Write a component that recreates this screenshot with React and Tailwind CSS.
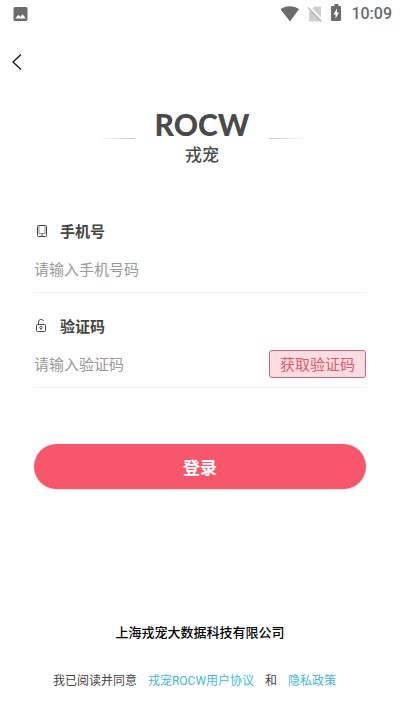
import { useState } from 'react';

function StatusBar() {
  return (
    <div className="flex h-7 items-center justify-between pl-3 pr-2 text-[#6b6b6b]">
      <svg className="h-4 w-4" viewBox="0 0 16 16" fill="currentColor">
        <path fillRule="evenodd" d="M3 1h11a1.5 1.5 0 0 1 1.5 1.5v11A1.5 1.5 0 0 1 14 15H3a1.5 1.5 0 0 1-1.5-1.5v-11A1.5 1.5 0 0 1 3 1zM3.2 12.5h10.6L10.6 8.2 8.3 11.1 6.4 8.8z" />
      </svg>
      <div className="flex items-center">
        <svg className="h-5 w-5" viewBox="0 0 20 20" fill="currentColor">
          <path d="M11 17.500 1.500 5.200C4 3.200 7.300 2.200 11 2.200s6.500 1 9 3z" />
        </svg>
        <svg className="ml-1 h-5 w-5" viewBox="0 0 20 20">
          <path d="M18 2.500v15H6V8L11.500 2.500z" fill="#cfcfcf" />
          <path d="M6 2.500 20 17" stroke="#fff" strokeWidth="2" />
          <path d="M5 3.500 18.500 17.500" stroke="#b5b5b5" strokeWidth="1.200" />
        </svg>
        <svg className="ml-1 h-5 w-4" viewBox="0 0 16 20" fill="currentColor">
          <path fillRule="evenodd" d="M7.500 0h4v2h1.700c.5 0 .8.300.8.800v13.400c0 .5-.3.800-.8.800H4.800c-.5 0-.8-.3-.8-.8V2.800c0-.5.300-.8.800-.8h2.700zM10 4.500 6.500 10.500h2.100v4L12 8.500h-2z" />
        </svg>
        <span className="ml-2 font-[Roboto,sans-serif] text-base font-medium">10:09</span>
      </div>
    </div>
  );
}

function PhoneIcon() {
  return (
    <svg className="h-4 w-4" viewBox="0 0 16 16" fill="none" stroke="#444">
      <rect x="3.500" y="2.500" width="9" height="11" rx="1" />
      <path d="M5 3v7.500h6V3" strokeWidth="0.6" />
      <path d="M7 12h2" />
    </svg>
  );
}

function LockIcon() {
  return (
    <svg className="h-4 w-4" viewBox="0 0 16 16" fill="none" stroke="#444">
      <rect x="2.500" y="6.500" width="9" height="7" rx="1" />
      <path d="M4.500 6.500V4a2.600 2.600 0 0 1 5-1" />
      <circle cx="7" cy="9.500" r="1.200" strokeWidth="0.9" />
      <path d="M7 10.700v1.300" strokeWidth="0.9" />
    </svg>
  );
}

function Field({ id, label, icon, placeholder, value, onChange, children }) {
  return (
    <div className="border-b border-[#f2f2f2] pb-px">
      <label htmlFor={id} className="flex h-6 items-center gap-2.5 text-[15px] font-bold text-[#444]">
        {icon}
        {label}
      </label>
      <div className="mt-1 flex h-11 items-center">
        <input
          id={id}
          type="text"
          placeholder={placeholder}
          value={value}
          onChange={(e) => onChange(e.target.value)}
          className="min-w-0 flex-1 text-[15px] text-[#444] outline-none placeholder:text-[#999]"
        />
        {children}
      </div>
    </div>
  );
}

function App() {
  const [phone, setPhone] = useState('');
  const [code, setCode] = useState('');

  return (
    <div className="flex min-h-screen flex-col bg-white font-['Noto_Sans_CJK_SC',sans-serif]">
      <StatusBar />
      <header className="flex h-17 items-center px-2">
        <button type="button" aria-label="返回" className="p-px">
          <svg className="h-4 w-4" viewBox="0 0 16 16" fill="none" stroke="#111" strokeWidth="1.300">
            <path d="M12 0.500 4 8l8 7.500" />
          </svg>
        </button>
      </header>

      <div className="mt-3 flex items-center justify-center gap-5 pl-1">
        <div className="h-px w-9 bg-linear-to-l from-[#c4c4c4] to-transparent"></div>
        <h1 className="text-center text-[#4a4a4a]">
          <span className="block font-[Lato,sans-serif] text-[30px] font-black leading-8">ROCW</span>
          <span className="block text-[17px] font-medium leading-7">戎宠</span>
        </h1>
        <div className="h-px w-9 bg-linear-to-r from-[#c4c4c4] to-transparent"></div>
      </div>

      <form className="mt-[51px] px-8.5" onSubmit={(e) => e.preventDefault()}>
        <div className="flex flex-col gap-[21px]">
          <Field id="phone" label="手机号" icon={<PhoneIcon />} placeholder="请输入手机号码" value={phone} onChange={setPhone} />
          <Field id="code" label="验证码" icon={<LockIcon />} placeholder="请输入验证码" value={code} onChange={setCode}>
            <button type="button" className="h-7 rounded-[3px] border border-[#c9667c] bg-[#fddde2] px-2.5 text-[15px] leading-6 text-[#dc5a6c]">
              获取验证码
            </button>
          </Field>
        </div>
        <button type="submit" className="mt-14 h-[45px] w-full rounded-full bg-[#f8566b] text-[17px] font-bold text-white shadow-sm">
          登录
        </button>
      </form>

      <footer className="mt-auto pb-5 text-center text-xs">
        <p className="text-[13px] font-medium leading-5 text-black">上海戎宠大数据科技有限公司</p>
        <p className="mt-7 flex justify-center gap-[11px] pr-[11px] leading-5 text-[#444]">
          <span>我已阅读并同意</span>
          <a href="#agreement" className="text-[#45b8dc]">戎宠<span className="font-[Roboto,sans-serif]">ROCW</span>用户协议</a>
          <span>和</span>
          <a href="#privacy" className="text-[#45b8dc]">隐私政策</a>
        </p>
      </footer>
    </div>
  );
}

export default App;
